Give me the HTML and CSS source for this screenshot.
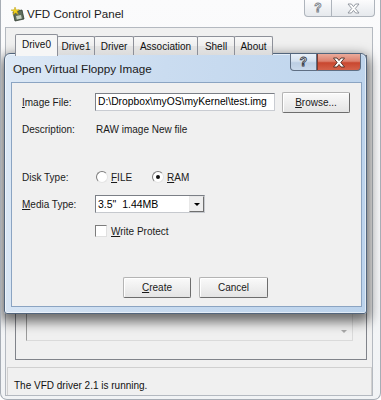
FILE: index.html
```html
<!DOCTYPE html>
<html>
<head>
<meta charset="utf-8">
<link rel="stylesheet" href="styles.css">
</head>
<body>
<div class="win">
  <div class="titlebar">
    <svg class="appicon" width="16" height="16" viewBox="0 0 16 16">
      <path d="M3 6 L12 4 L14 13 L5 15 Z" fill="#5d6b5a" stroke="#2f3a2e" stroke-width="0.8"/>
      <path d="M6 10 L11 9 L11.8 12.6 L6.8 13.6 Z" fill="#c9d2c4"/>
      <path d="M5 1 L6.2 4 L9.4 3.6 L7 5.6 L8.4 8.6 L5.6 6.8 L3 8.8 L3.8 5.6 L1 4 L4.2 3.8 Z" fill="#f2d21c" stroke="#b89a10" stroke-width="0.5"/>
    </svg>
    <span class="wtitle">VFD Control Panel</span>
    <div class="caps">
      <span class="cap ohelp"><span class="q oq">?</span></span>
      <span class="cap oclose">
        <svg width="13" height="11" viewBox="0 0 13 11"><path d="M1 1 L4.4 1 L6.5 3.6 L8.6 1 L12 1 L8.3 5.5 L12 10 L8.6 10 L6.5 7.4 L4.4 10 L1 10 L4.7 5.5 Z" fill="#fdfdfd" stroke="#8a9098" stroke-width="0.9"/></svg>
      </span>
    </div>
  </div>
  <div class="client">
    <div class="tabs">
      <div class="tab sel t0">Drive0</div>
      <div class="tab t1">Drive1</div>
      <div class="tab t2">Driver</div>
      <div class="tab t3">Association</div>
      <div class="tab t4">Shell</div>
      <div class="tab t5">About</div>
    </div>
    <div class="panel">
      <div class="list"><span class="sarrow"></span></div>
    </div>
    <div class="status">The VFD driver 2.1 is running.</div>
  </div>

  <div class="dialog">
    <div class="dtitlebar">
      <span class="dtitle">Open Virtual Floppy Image</span>
      <div class="dcaps">
        <span class="dcap dhelp"><span class="q dq">?</span></span>
        <span class="dcap dclose">
          <svg width="14" height="11" viewBox="0 0 14 11"><path d="M1.5 1 L5 1 L7 3.5 L9 1 L12.5 1 L8.8 5.5 L12.5 10 L9 10 L7 7.5 L5 10 L1.5 10 L5.2 5.5 Z" fill="#ffffff" stroke="#4a2a22" stroke-width="0.9"/></svg>
        </span>
      </div>
    </div>
    <div class="dclient">
      <div class="row r1">
        <span class="lbl"><u>I</u>mage File:</span>
        <div class="edit">D:\Dropbox\myOS\myKernel\test.img</div>
        <div class="btn browse"><span><u>B</u>rowse...</span></div>
      </div>
      <div class="row">
        <span class="lbl">Description:</span>
        <span class="val">RAW image New file</span>
      </div>
      <div class="row r3">
        <span class="lbl">Disk Type:</span>
        <span class="radio r-file"><span class="rb"></span><span><u>F</u>ILE</span></span>
        <span class="radio"><span class="rb on"><span class="dot"></span></span><span><u>R</u>AM</span></span>
      </div>
      <div class="row">
        <span class="lbl"><u>M</u>edia Type:</span>
        <div class="combo"><span class="ctext">3.5"&nbsp;&nbsp;1.44MB</span><span class="cbtn"><span class="tri"></span></span></div>
      </div>
      <div class="row">
        <span class="lbl"></span>
        <span class="check"><span class="cbx"></span><span><u>W</u>rite Protect</span></span>
      </div>
      <div class="brow">
        <div class="btn create"><span><u>C</u>reate</span></div>
        <div class="btn cancel"><span>Cancel</span></div>
      </div>
    </div>
  </div>
</div>
</body>
</html>
```

FILE: styles.css
```css
html, body {
  margin: 0;
  padding: 0;
  background: #ffffff;
}
body {
  font-family: "Liberation Sans", Arial, sans-serif;
  font-size: 10px;
  color: #000;
}
.win {
  position: relative;
  width: 381px;
  height: 400px;
  box-sizing: border-box;
  border: 1px solid #a7adb5;
  border-top: none;
  border-radius: 0 0 7px 7px;
  background: linear-gradient(to bottom, #fbfbfc 0, #f1f3f5 100%);
  overflow: hidden;
}
.titlebar {
  height: 27px;
  display: flex;
  align-items: center;
  padding-left: 9px;
}
.appicon {
  margin-right: 1px;
  flex: none;
}
.wtitle {
  font-size: 11.6px;
  color: #1c1c1c;
}
.caps {
  margin-left: auto;
  margin-right: 5px;
  align-self: flex-start;
  display: flex;
}
.cap {
  height: 17px;
  box-sizing: border-box;
  border: 1px solid #aeb4bc;
  border-top: none;
  background: linear-gradient(to bottom, #fcfcfd 0, #eef0f3 60%, #e6e9ed 100%);
  display: flex;
  align-items: center;
  justify-content: center;
}
.ohelp {
  width: 28px;
  border-radius: 0 0 0 4px;
}
.oclose {
  width: 43px;
  border-left: none;
  border-radius: 0 0 4px 0;
}
.q {
  font-weight: bold;
  font-size: 12px;
  line-height: 12px;
  color: #ffffff;
}
.oq {
  -webkit-text-stroke: 0.9px #7d838b;
}
.client {
  margin-left: 4px;
  width: 368px;
  height: 369px;
  box-sizing: border-box;
  border: 1px solid #b4b9c0;
  background: #f0f0f0;
}
.tabs {
  margin-left: 9px;
  margin-top: 6px;
  height: 21px;
  display: flex;
  align-items: flex-end;
  position: relative;
  z-index: 1;
}
.tab {
  height: 19px;
  box-sizing: border-box;
  border: 1px solid #8d9099;
  border-bottom: none;
  margin-left: -1px;
  background: linear-gradient(to bottom, #f8f8f8 0, #eeeeee 50%, #e4e4e4 51%, #dcdcdc 100%);
  display: flex;
  align-items: center;
  justify-content: center;
  font-size: 10px;
  color: #111;
  border-radius: 2px 2px 0 0;
}
.tab.sel {
  height: 22px;
  margin-bottom: -1px;
  margin-left: 0;
  background: #f6f6f6;
  position: relative;
  z-index: 2;
  padding-bottom: 2px;
}
.t0 { width: 43px; }
.t1 { width: 38px; }
.t2 { width: 40px; }
.t3 { width: 65px; }
.t4 { width: 38px; }
.t5 { width: 39px; }
.panel {
  margin-left: 9px;
  width: 352px;
  height: 305px;
  box-sizing: border-box;
  border: 1px solid #80838a;
  background: #f0f0f0;
  padding-top: 43px;
  padding-left: 10px;
}
.list {
  width: 327px;
  height: 242px;
  box-sizing: border-box;
  border: 1px solid;
  border-color: #9a9a9a #dadada #dadada #9a9a9a;
  background: #f0f0f0;
  display: flex;
  justify-content: flex-end;
  align-items: flex-end;
  padding: 0 5px 7px 0;
}
.sarrow {
  width: 0;
  height: 0;
  border-left: 3px solid transparent;
  border-right: 3px solid transparent;
  border-top: 3px solid #a8a8a8;
}
.status {
  margin-top: 7px;
  margin-left: 1px;
  width: 365px;
  height: 28px;
  box-sizing: border-box;
  border: 1px solid #d0d0d0;
  border-bottom: none;
  padding-left: 6px;
  padding-top: 12px;
  line-height: 12px;
  font-size: 10px;
  color: #111;
}

/* dialog */
.dialog {
  position: absolute;
  left: 3px;
  top: 53px;
  width: 363px;
  height: 261px;
  box-sizing: border-box;
  border: 1px solid #52657c;
  border-radius: 6px 6px 3px 3px;
  background: linear-gradient(100deg, #dde9f6 0, #cadcf0 40%, #bcd3ec 100%);
  box-shadow: 0 5px 12px 3px rgba(0, 0, 0, 0.55), inset 0 0 0 1px rgba(255, 255, 255, 0.55);
}
.dtitlebar {
  height: 28px;
  display: flex;
  align-items: center;
  padding-left: 8px;
}
.dtitle {
  font-size: 11.7px;
  color: #1a1a1a;
}
.dcaps {
  margin-left: auto;
  margin-right: 5px;
  align-self: flex-start;
  display: flex;
}
.dcap {
  height: 17px;
  box-sizing: border-box;
  border: 1px solid #5f6f84;
  border-top: none;
  display: flex;
  align-items: center;
  justify-content: center;
}
.dhelp {
  width: 27px;
  border-radius: 0 0 0 4px;
  background: linear-gradient(to bottom, #e9f0f8 0, #d4e1ef 45%, #bccee3 55%, #c9d9eb 100%);
}
.dq {
  -webkit-text-stroke: 0.9px #39424d;
}
.dclose {
  width: 44px;
  border-left: 1px solid #7a3b30;
  border-radius: 0 0 4px 0;
  background: linear-gradient(to bottom, #ebab9b 0, #dc806d 45%, #c9472f 55%, #d4624a 100%);
}
.dclient {
  margin-left: 6px;
  width: 351px;
  height: 225px;
  box-sizing: border-box;
  border: 1px solid #8ba4c2;
  background: #f0f0f0;
  padding-left: 10px;
  padding-top: 8px;
}
.row {
  display: flex;
  align-items: center;
  height: 22px;
  margin-top: 5px;
  font-size: 10px;
  color: #1a1a1a;
}
.r1 { margin-top: 0; }
.r3 { margin-top: 26px; }
.lbl {
  width: 73px;
  flex: none;
}
.val {
  padding-left: 1px;
}
.edit {
  width: 180px;
  height: 18px;
  box-sizing: border-box;
  border: 1px solid #8d9096;
  border-color: #7b7f86 #c9ccd2 #c9ccd2 #7b7f86;
  background: #ffffff;
  font-size: 10.3px;
  line-height: 16px;
  padding-left: 2px;
  color: #000;
  white-space: nowrap;
  overflow: hidden;
}
.btn {
  height: 21px;
  box-sizing: border-box;
  border: 1px solid;
  border-color: #b4b4b4 #6d6d6d #6d6d6d #b4b4b4;
  border-radius: 2px;
  background: linear-gradient(to bottom, #fafafa 0, #efefef 50%, #e4e4e4 100%);
  box-shadow: inset 1px 1px 0 #ffffff;
  display: flex;
  align-items: center;
  justify-content: center;
  font-size: 10px;
  color: #1a1a1a;
}
.browse {
  width: 68px;
  margin-left: 7px;
}
.radio {
  display: flex;
  align-items: center;
  gap: 3px;
}
.r-file {
  width: 56px;
  margin-left: 1px;
}
.rb {
  width: 12px;
  height: 12px;
  box-sizing: border-box;
  border-radius: 50%;
  border: 1px solid;
  border-color: #7c7c7c #e4e4e4 #e4e4e4 #7c7c7c;
  background: #ffffff;
  display: flex;
  align-items: center;
  justify-content: center;
}
.dot {
  width: 4px;
  height: 4px;
  border-radius: 50%;
  background: #111;
}
.combo {
  width: 110px;
  height: 18px;
  box-sizing: border-box;
  border: 1px solid;
  border-color: #7b7f86 #c6c9ce #c6c9ce #7b7f86;
  background: #ffffff;
  display: flex;
  align-items: center;
}
.ctext {
  flex: 1;
  padding-left: 2px;
  font-size: 10.5px;
  color: #000;
}
.cbtn {
  width: 15px;
  height: 16px;
  box-sizing: border-box;
  border: 1px solid;
  border-color: #e8e8e8 #6f6f6f #6f6f6f #e8e8e8;
  background: #eeeeee;
  display: flex;
  align-items: center;
  justify-content: center;
}
.tri {
  width: 0;
  height: 0;
  border-left: 3px solid transparent;
  border-right: 3px solid transparent;
  border-top: 3px solid #000;
}
.check {
  display: flex;
  align-items: center;
  gap: 4px;
}
.cbx {
  width: 12px;
  height: 12px;
  box-sizing: border-box;
  border: 1px solid;
  border-color: #7c7c7c #e0e0e0 #e0e0e0 #7c7c7c;
  background: #ffffff;
}
.brow {
  display: flex;
  gap: 8px;
  margin-top: 35px;
  padding-left: 101px;
}
.create { width: 68px; }
.cancel { width: 69px; }
```
